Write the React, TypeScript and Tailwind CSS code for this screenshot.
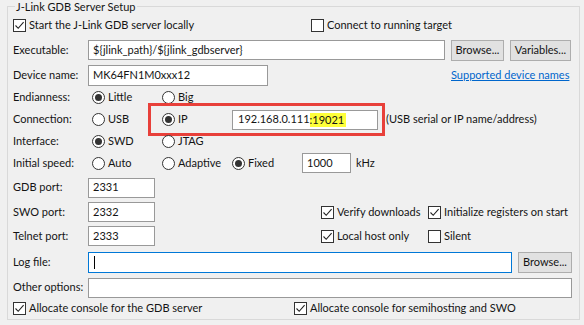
import React from "react";

const font = "font-['Lato',sans-serif] text-[11px] text-[#141414] whitespace-nowrap";

function Box({ checked }: { checked?: boolean }) {
  return (
    <span className="flex h-[13px] w-[13px] shrink-0 items-center justify-center border border-[#333] bg-white">
      {checked && (
        <svg width="11" height="11" viewBox="0 0 11 11">
          <path d="M1.5 5.5 L4.2 8.3 L9.6 2.2" fill="none" stroke="#222" strokeWidth="1.1" />
        </svg>
      )}
    </span>
  );
}

function Check({ label, checked, className = "" }: { label: string; checked?: boolean; className?: string }) {
  return (
    <label className={`flex shrink-0 items-center gap-[3px] ${className}`}>
      <Box checked={checked} />
      <span>{label}</span>
    </label>
  );
}

function Radio({ label, checked, className = "w-[70px]" }: { label: string; checked?: boolean; className?: string }) {
  return (
    <label className={`flex shrink-0 items-center gap-[3px] ${className}`}>
      <span className="flex h-[13px] w-[13px] items-center justify-center rounded-full border border-[#333] bg-white">
        {checked && <span className="h-[7px] w-[7px] rounded-full bg-[#333]" />}
      </span>
      <span>{label}</span>
    </label>
  );
}

function Field({ value = "", className = "" }: { value?: string; className?: string }) {
  return (
    <div className={`flex h-[20px] shrink-0 items-center border border-[#999] bg-white px-[4px] ${className}`}>
      {value}
    </div>
  );
}

function Btn({ children, className = "" }: { children: React.ReactNode; className?: string }) {
  return (
    <button className={`flex h-[21px] shrink-0 items-center justify-center border border-[#adadad] bg-[#e1e1e1] ${className}`}>
      {children}
    </button>
  );
}

function Label({ children }: { children: React.ReactNode }) {
  return <span className="w-[75px] shrink-0">{children}</span>;
}

export default function App() {
  return (
    <div className={`h-[325px] w-[584px] bg-[#f0f0f0] ${font}`}>
      <fieldset className="ml-[7px] w-[573px] border border-[#d9d9d9] pb-[3px] pl-[5px]">
        <legend className="ml-[2px] px-px leading-[13px]">J-Link GDB Server Setup</legend>

        <div className="mt-[1px] flex h-[23px] items-center">
          <Check checked label="Start the J-Link GDB server locally" className="w-[298px]" />
          <Check label="Connect to running target" />
        </div>

        <div className="flex h-[26px] items-center">
          <Label>Executable:</Label>
          <Field value="${jlink_path}/${jlink_gdbserver}" className="w-[357px]" />
          <Btn className="ml-[6px] w-[53px]">Browse...</Btn>
          <Btn className="ml-[6px] w-[61px]">Variables...</Btn>
        </div>

        <div className="flex h-[24px] items-center">
          <Label>Device name:</Label>
          <Field value="MK64FN1M0xxx12" className="h-[21px] w-[180px]" />
          <a className="ml-[183px] text-[#0066cc] underline">Supported device names</a>
        </div>

        <div className="flex h-[21px] items-center">
          <Label>Endianness:</Label>
          <div className="flex pl-[4px]">
            <Radio checked label="Little" />
            <Radio label="Big" />
          </div>
        </div>

        <div className="flex h-[23px] items-center">
          <Label>Connection:</Label>
          <div className="flex items-center pl-[4px]">
            <Radio label="USB" className="w-[56px]" />
            <div className="-my-[5px] flex h-[33px] items-center border-[3px] border-[#e8403a] pl-[11px] pr-[4px]">
              <Radio checked label="IP" />
              <div className="flex h-[20px] w-[146px] items-center border border-[#999] bg-white pl-[5px]">
                <span>192.168.0.111</span>
                <span className="bg-[#ffff3a] pr-[2px] leading-[14px]">:19021</span>
              </div>
            </div>
            <span className="ml-px">(USB serial or IP name/address)</span>
          </div>
        </div>

        <div className="flex h-[21px] items-center">
          <Label>Interface:</Label>
          <div className="flex pl-[4px]">
            <Radio checked label="SWD" />
            <Radio label="JTAG" />
          </div>
        </div>

        <div className="flex h-[22px] items-center">
          <Label>Initial speed:</Label>
          <div className="flex items-center pl-[4px]">
            <Radio label="Auto" />
            <Radio label="Adaptive" />
            <Radio checked label="Fixed" />
            <Field value="1000" className="w-[49px]" />
            <span className="ml-[5px]">kHz</span>
          </div>
        </div>

        <div className="flex h-[27px] items-center">
          <Label>GDB port:</Label>
          <Field value="2331" className="w-[67px]" />
        </div>

        <div className="flex h-[22px] items-center">
          <Label>SWO port:</Label>
          <Field value="2332" className="w-[67px]" />
          <Check checked label="Verify downloads" className="ml-[166px] w-[107px]" />
          <Check checked label="Initialize registers on start" />
        </div>

        <div className="flex h-[26px] items-center">
          <Label>Telnet port:</Label>
          <Field value="2333" className="w-[67px]" />
          <Check checked label="Local host only" className="ml-[166px] w-[107px]" />
          <Check label="Silent" />
        </div>

        <div className="flex h-[26px] items-center">
          <Label>Log file:</Label>
          <div className="flex h-[21px] w-[424px] shrink-0 items-center border border-[#0078d7] bg-white pl-[5px]">
            <span className="h-[13px] w-px bg-black" />
          </div>
          <Btn className="ml-[6px] w-[54px]">Browse...</Btn>
        </div>

        <div className="flex h-[25px] items-center">
          <Label>Other options:</Label>
          <Field className="w-[484px]" />
        </div>

        <div className="flex h-[16px] items-center">
          <Check checked label="Allocate console for the GDB server" className="w-[281px]" />
          <Check checked label="Allocate console for semihosting and SWO" />
        </div>
      </fieldset>
    </div>
  );
}
